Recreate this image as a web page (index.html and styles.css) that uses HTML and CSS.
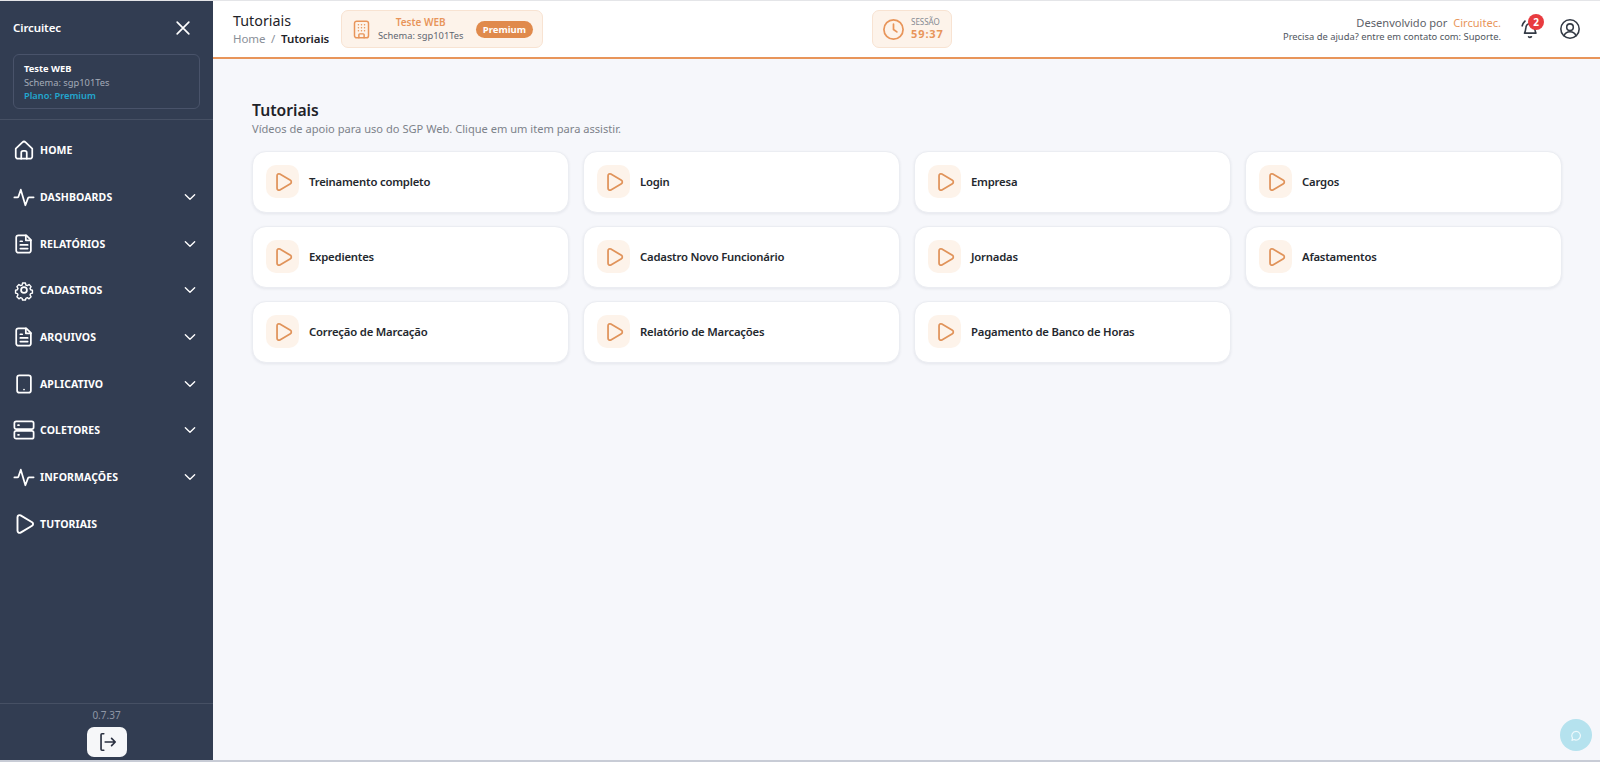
FILE: index.html
```html
<!DOCTYPE html>
<html lang="pt-BR">
<head>
    <meta charset="UTF-8">
    <meta name="viewport" content="width=device-width, initial-scale=1.0">
    <title>Tutoriais</title>
    <link rel="stylesheet" href="styles.css">
</head>
<body>
    <svg class="icon-defs" width="0" height="0">
        <defs>
            <symbol id="i-play" viewBox="0 0 24 24"><path d="M5.5 5.2c0-1.6 1.7-2.6 3.1-1.8l11.5 6.8c1.3.8 1.3 2.8 0 3.6L8.6 20.6c-1.4.8-3.1-.2-3.1-1.8z"/></symbol>
            <symbol id="i-pulse" viewBox="0 0 24 24"><path d="M1.5 12.5h3.2c.6 0 1-.3 1.2-.8L8.5 4l5 17 3-8c.2-.4.6-.7 1-.7h5"/></symbol>
            <symbol id="i-doc" viewBox="0 0 24 24"><path d="M6 2.5h8.5l5 5V19a2.5 2.5 0 0 1-2.5 2.5H6A2.5 2.5 0 0 1 3.5 19V5A2.5 2.5 0 0 1 6 2.5z"/><path d="M14 2.5V8h5.5M8 9h2M8 13h8M8 17h8"/></symbol>
            <symbol id="i-chev" viewBox="0 0 24 24"><path d="M5 8.5l7 7 7-7"/></symbol>
        </defs>
    </svg>

    <div class="app">
        <!-- Sidebar -->
        <aside class="sidebar">
            <div class="brand">
                <span class="brand-name">Circuitec</span>
                <svg class="close-icon" viewBox="0 0 24 24"><path d="M5 5l14 14M19 5L5 19"/></svg>
            </div>
            <div class="tenant-box-wrap">
                <div class="tenant-box">
                    <div class="tenant-name">Teste WEB</div>
                    <div class="tenant-schema">Schema: sgp101Tes</div>
                    <div class="tenant-plan">Plano: Premium</div>
                </div>
            </div>

            <nav class="menu">
                <a class="menu-item">
                    <svg class="menu-icon" viewBox="0 0 24 24"><path d="M3 10.5L10.2 3.6a2.6 2.6 0 0 1 3.6 0L21 10.5V19a2.5 2.5 0 0 1-2.5 2.5h-13A2.5 2.5 0 0 1 3 19z"/><path d="M9 21.5V15a2 2 0 0 1 2-2h2a2 2 0 0 1 2 2v6.5"/></svg>
                    <span>HOME</span>
                </a>
                <a class="menu-item">
                    <svg class="menu-icon"><use href="#i-pulse"/></svg>
                    <span>DASHBOARDS</span>
                    <svg class="chev"><use href="#i-chev"/></svg>
                </a>
                <a class="menu-item">
                    <svg class="menu-icon"><use href="#i-doc"/></svg>
                    <span>RELATÓRIOS</span>
                    <svg class="chev"><use href="#i-chev"/></svg>
                </a>
                <a class="menu-item">
                    <svg class="menu-icon" viewBox="0 0 24 24"><path d="M10 2.5h4l.6 2.8 1.9.8 2.4-1.5 2.8 2.8-1.5 2.4.8 1.9 2.5.6v4l-2.5.6-.8 1.9 1.5 2.4-2.8 2.8-2.4-1.5-1.9.8-.6 2.3h-4l-.6-2.3-1.9-.8-2.4 1.5-2.8-2.8 1.5-2.4-.8-1.9-2.5-.6v-4l2.5-.6.8-1.9-1.5-2.4 2.8-2.8 2.4 1.5 1.9-.8z" transform="translate(2.4 2.4) scale(.8)"/><circle cx="12" cy="12" r="3.2"/></svg>
                    <span>CADASTROS</span>
                    <svg class="chev"><use href="#i-chev"/></svg>
                </a>
                <a class="menu-item">
                    <svg class="menu-icon"><use href="#i-doc"/></svg>
                    <span>ARQUIVOS</span>
                    <svg class="chev"><use href="#i-chev"/></svg>
                </a>
                <a class="menu-item">
                    <svg class="menu-icon" viewBox="0 0 24 24"><rect x="4.5" y="2.5" width="15" height="19" rx="2.5"/><path d="M12 18h.01"/></svg>
                    <span>APLICATIVO</span>
                    <svg class="chev"><use href="#i-chev"/></svg>
                </a>
                <a class="menu-item">
                    <svg class="menu-icon" viewBox="0 0 24 24"><rect x="1.5" y="2.5" width="21" height="8.5" rx="2"/><rect x="1.5" y="13" width="21" height="8.5" rx="2"/><path d="M5.5 6.7h1M5.5 17.2h1"/></svg>
                    <span>COLETORES</span>
                    <svg class="chev"><use href="#i-chev"/></svg>
                </a>
                <a class="menu-item">
                    <svg class="menu-icon"><use href="#i-pulse"/></svg>
                    <span>INFORMAÇÕES</span>
                    <svg class="chev"><use href="#i-chev"/></svg>
                </a>
                <a class="menu-item">
                    <svg class="menu-icon menu-icon-play"><use href="#i-play"/></svg>
                    <span>TUTORIAIS</span>
                </a>
            </nav>

            <div class="sidebar-foot">
                <div class="version">0.7.37</div>
                <button class="logout">
                    <svg viewBox="0 0 24 24"><path d="M8.5 3H6.5a1 1 0 0 0-1 1v16a1 1 0 0 0 1 1h2M10 12h11M17 8l4 4-4 4"/></svg>
                </button>
            </div>
        </aside>

        <div class="main">
            <!-- Header -->
            <header class="topbar">
                <div class="crumbs">
                    <div class="crumbs-title">Tutoriais</div>
                    <div class="crumbs-path">Home &nbsp;/&nbsp; <b>Tutoriais</b></div>
                </div>
                <div class="tenant-chip">
                    <svg class="chip-icon" viewBox="0 0 24 24"><rect x="4" y="2.5" width="16" height="19" rx="2.5"/><path d="M9 21.5V18a1 1 0 0 1 1-1h4a1 1 0 0 1 1 1v3.5M8.5 6.5h.01M12 6.5h.01M15.5 6.5h.01M8.5 10h.01M12 10h.01M15.5 10h.01M8.5 13.5h.01M12 13.5h.01M15.5 13.5h.01"/></svg>
                    <div class="chip-text">
                        <div class="chip-name">Teste WEB</div>
                        <div class="chip-schema">Schema: sgp101Tes</div>
                    </div>
                    <span class="chip-badge">Premium</span>
                </div>
                <div class="session-wrap">
                    <div class="session">
                        <svg class="session-icon" viewBox="0 0 24 24"><circle cx="12" cy="12" r="10"/><path d="M12 6.5V12l3.5 2.5"/></svg>
                        <div>
                            <div class="session-label">SESSÃO</div>
                            <div class="session-time">59:37</div>
                        </div>
                    </div>
                </div>
                <div class="dev-info">
                    <div class="dev-line">Desenvolvido por &nbsp;<span class="orange">Circuitec.</span></div>
                    <div class="help-line">Precisa de ajuda? entre em contato com: Suporte.</div>
                </div>
                <div class="bell">
                    <svg viewBox="0 0 24 24"><path d="M6 16.5c1-1.5 1-3 1.5-6A5 5 0 0 1 12 6c2.8 0 4.5 2 5 4.5.5 3 .5 4.500 1.500 6zM10.500 20.500c.8.7 2 .7 3 0M3.500 8.500C4 6.500 5 5 6.500 3.500"/></svg>
                    <span class="bell-count">2</span>
                </div>
                <svg class="user-icon" viewBox="0 0 24 24"><circle cx="12" cy="12" r="10"/><circle cx="12" cy="10" r="3.6"/><path d="M5.5 19.5c1-3 3.5-4.500 6.500-4.500s5.500 1.500 6.500 4.500"/></svg>
            </header>

            <!-- Tutoriais -->
            <main class="content">
                <h1>Tutoriais</h1>
                <p class="subtitle">Vídeos de apoio para uso do SGP Web. Clique em um item para assistir.</p>
                <div class="cards">
                    <a class="card"><span class="card-icon"><svg><use href="#i-play"/></svg></span>Treinamento completo</a>
                    <a class="card"><span class="card-icon"><svg><use href="#i-play"/></svg></span>Login</a>
                    <a class="card"><span class="card-icon"><svg><use href="#i-play"/></svg></span>Empresa</a>
                    <a class="card"><span class="card-icon"><svg><use href="#i-play"/></svg></span>Cargos</a>
                    <a class="card"><span class="card-icon"><svg><use href="#i-play"/></svg></span>Expedientes</a>
                    <a class="card"><span class="card-icon"><svg><use href="#i-play"/></svg></span>Cadastro Novo Funcionário</a>
                    <a class="card"><span class="card-icon"><svg><use href="#i-play"/></svg></span>Jornadas</a>
                    <a class="card"><span class="card-icon"><svg><use href="#i-play"/></svg></span>Afastamentos</a>
                    <a class="card"><span class="card-icon"><svg><use href="#i-play"/></svg></span>Correção de Marcação</a>
                    <a class="card"><span class="card-icon"><svg><use href="#i-play"/></svg></span>Relatório de Marcações</a>
                    <a class="card"><span class="card-icon"><svg><use href="#i-play"/></svg></span>Pagamento de Banco de Horas</a>
                </div>
            </main>
        </div>
    </div>

    <button class="chat-btn">
        <svg viewBox="0 0 24 24"><path d="M12 4a7.5 7.5 0 1 1-3.5 14.100L5 19.500l1-3.800A7.500 7.500 0 0 1 12 4z"/></svg>
    </button>
</body>
</html>
```

FILE: styles.css
```css
* {
    box-sizing: border-box;
}
html, body {
    height: 100%;
}
body {
    margin: 0;
    font-family: "Noto Sans", "Open Sans", sans-serif;
    background: #f6f7fb;
    color: #1f2329;
    overflow: hidden;
}
.icon-defs {
    position: absolute;
}
svg {
    fill: none;
    stroke: currentColor;
    stroke-linecap: round;
    stroke-linejoin: round;
}
.app {
    display: flex;
    height: 762px;
    border-top: 1px solid #e4e5e8;
    border-bottom: 2px solid #c8ccd6;
}
.sidebar {
    width: 213px;
    flex-shrink: 0;
    display: flex;
    flex-direction: column;
    background: #323d52;
    color: #fff;
}
.brand {
    display: flex;
    justify-content: space-between;
    align-items: center;
    height: 53px;
    padding: 0 20px 0 13px;
}
.brand-name {
    font-size: 11.5px;
    font-weight: 600;
    letter-spacing: -0.1px;
}
.close-icon {
    width: 20px;
    height: 20px;
    stroke-width: 2;
}
.tenant-box-wrap {
    padding: 0 13px 10px;
    border-bottom: 1px solid #465064;
}
.tenant-box {
    height: 55px;
    padding: 7px 10px;
    border: 1px solid #49536a;
    border-radius: 6px;
    font-size: 9.3px;
    line-height: 13.5px;
}
.tenant-name {
    font-weight: 700;
}
.tenant-schema {
    color: #a4abb8;
}
.tenant-plan {
    color: #22a7cf;
    font-weight: 600;
}
.menu {
    flex: 1;
    padding-top: 7px;
}
.menu-item {
    display: flex;
    align-items: center;
    height: 46.7px;
    padding: 0 15px 0 13px;
    font-size: 10.5px;
    font-weight: 700;
    letter-spacing: 0.1px;
}
.menu-item span {
    flex: 1;
}
.menu-icon {
    width: 22px;
    height: 22px;
    margin-right: 5px;
    stroke-width: 1.9px;
}
.menu-icon-play {
    width: 24px;
    height: 24px;
    margin: 0 4px 0 -1px;
}
.chev {
    width: 16px;
    height: 16px;
    stroke-width: 2;
}
.sidebar-foot {
    height: 57px;
    border-top: 1px solid #465064;
    text-align: center;
}
.version {
    margin-top: 4px;
    font-size: 10px;
    line-height: 15px;
    color: #8f97a6;
}
.logout {
    display: block;
    width: 40px;
    height: 30px;
    margin: 4px auto 0;
    padding: 0;
    border: none;
    border-radius: 7px;
    background: #f6f7f9;
    color: #2a3040;
}
.logout svg {
    width: 22px;
    height: 22px;
    stroke-width: 1.8;
    vertical-align: middle;
}
.main {
    flex: 1;
    min-width: 0;
}
.topbar {
    display: flex;
    align-items: center;
    height: 58px;
    padding: 0 19px 0 20px;
    background: #fff;
    border-bottom: 2px solid #e8955a;
}
.crumbs {
    width: 108px;
    flex-shrink: 0;
}
.crumbs-title {
    font-size: 14.3px;
    line-height: 20px;
}
.crumbs-path {
    font-size: 11.5px;
    line-height: 16px;
    color: #8a8f98;
    letter-spacing: -0.1px;
}
.crumbs-path b {
    font-weight: 600;
    color: #1f2329;
}
.tenant-chip {
    display: flex;
    align-items: center;
    width: 202px;
    height: 38px;
    padding: 0 9px;
    background: #fdf3ea;
    border: 1px solid #f8e3d2;
    border-radius: 7px;
}
.chip-icon {
    width: 21px;
    height: 23px;
    color: #e8955a;
    stroke-width: 1.7;
    margin-right: 6px;
}
.chip-text {
    text-align: center;
    white-space: nowrap;
    font-size: 9.3px;
    line-height: 13px;
    color: #5f6670;
}
.chip-name {
    color: #e8955a;
    font-weight: 600;
    font-size: 10px;
}
.chip-badge {
    margin-left: auto;
    background: #e08a4c;
    color: #fff;
    font-size: 9.5px;
    font-weight: 700;
    line-height: 17px;
    padding: 0 7px;
    border-radius: 9px;
}
.session-wrap {
    flex: 1;
    padding-left: 329px;
}
.session {
    display: inline-flex;
    align-items: center;
    gap: 6px;
    height: 38px;
    width: 80px;
    padding: 0 9px;
    background: #fdf3ea;
    border: 1px solid #f8e3d2;
    border-radius: 7px;
}
.session-icon {
    width: 23px;
    height: 23px;
    color: #e8955a;
    stroke-width: 1.8;
    flex-shrink: 0;
}
.session-label {
    font-size: 8px;
    line-height: 10px;
    color: #858a92;
}
.session-time {
    font-size: 11px;
    line-height: 14px;
    font-weight: 700;
    letter-spacing: 0.9px;
    color: #e8955a;
}
.dev-info {
    text-align: right;
    margin-right: 18px;
}
.dev-line {
    font-size: 11.1px;
    line-height: 15px;
    color: #5d6168;
}
.orange {
    color: #e8955a;
}
.help-line {
    font-size: 9.4px;
    line-height: 13px;
    color: #50565e;
}
.bell {
    position: relative;
    width: 22px;
    height: 22px;
    margin-right: 18px;
}
.bell svg {
    width: 22px;
    height: 22px;
    stroke-width: 1.8;
    color: #333a45;
}
.bell-count {
    position: absolute;
    top: -4px;
    left: 9px;
    width: 16px;
    height: 16px;
    border-radius: 50%;
    background: #e83b3f;
    color: #fff;
    font-size: 10px;
    font-weight: 700;
    line-height: 16px;
    text-align: center;
}
.user-icon {
    width: 22px;
    height: 22px;
    color: #333a45;
    stroke-width: 1.7;
}
.content {
    padding: 40px 38px 0 39px;
}
h1 {
    margin: 0;
    font-size: 15.7px;
    line-height: 22px;
    font-weight: 600;
}
.subtitle {
    margin: 0 0 13.5px;
    font-size: 11.1px;
    line-height: 16px;
    color: #7d828a;
}
.cards {
    display: grid;
    grid-template-columns: repeat(4, 1fr);
    gap: 13px 14px;
}
.card {
    display: flex;
    align-items: center;
    gap: 10px;
    height: 62px;
    padding: 0 13px;
    background: #fff;
    border: 1px solid #ebedf2;
    border-radius: 14px;
    box-shadow: 0 1px 3px rgba(30, 40, 60, 0.08);
    font-size: 11.3px;
    font-weight: 600;
    letter-spacing: -0.2px;
    color: #24282e;
}
.card-icon {
    display: flex;
    align-items: center;
    justify-content: center;
    width: 33px;
    height: 33px;
    background: #fdf3ea;
    border-radius: 10px;
    color: #e0935a;
}
.card-icon svg {
    width: 22px;
    height: 22px;
    stroke-width: 1.9;
}
.chat-btn {
    position: fixed;
    right: 8px;
    bottom: 11px;
    width: 32px;
    height: 32px;
    padding: 0;
    border: none;
    border-radius: 50%;
    background: #b5e2ee;
    color: #eef9fc;
}
.chat-btn svg {
    width: 14px;
    height: 14px;
    stroke-width: 2;
    vertical-align: middle;
}
```
